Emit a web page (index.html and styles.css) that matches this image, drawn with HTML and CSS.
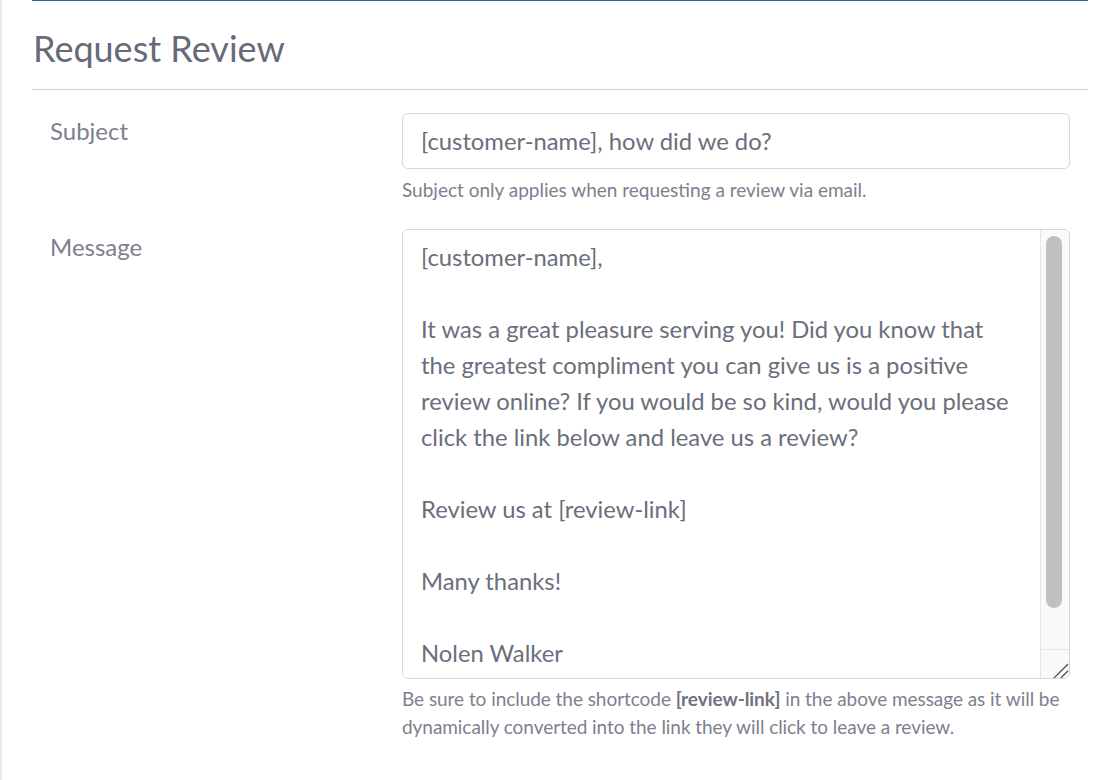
FILE: index.html
```html
<!DOCTYPE html>
<html lang="en">
<head>
<meta charset="utf-8">
<title>Request Review</title>
<link rel="stylesheet" href="styles.css">
</head>
<body>
<div class="page">
  <div class="rail"></div>
  <main class="main">
    <section class="panel">
      <h1 class="title">Request Review</h1>
      <div class="row row-subject">
        <label class="label" for="subject">Subject</label>
        <div class="field">
          <input id="subject" class="input" type="text" value="[customer-name], how did we do?">
          <p class="help">Subject only applies when requesting a review via email.</p>
        </div>
      </div>
      <div class="row row-message">
        <label class="label" for="message">Message</label>
        <div class="field">
          <div class="textbox">
            <textarea id="message" class="textarea">[customer-name],

It was a great pleasure serving you! Did you know that the greatest compliment you can give us is a positive review online? If you would be so kind, would you please click the link below and leave us a review?

Review us at [review-link]

Many thanks!

Nolen Walker
</textarea>
            <div class="scrollbar" aria-hidden="true">
              <div class="track"><div class="thumb"></div></div>
              <div class="corner">
                <svg width="29" height="29" viewBox="0 0 29 29"><path d="M13 29 L28 14 M20 29 L28 21" stroke="#575757" stroke-width="1.4" fill="none"/></svg>
              </div>
            </div>
          </div>
          <p class="help help-long">Be sure to include the shortcode <strong>[review-link]</strong> in the above message as it will be dynamically converted into the link they will click to leave a review.</p>
        </div>
      </div>
    </section>
  </main>
</div>
</body>
</html>
```
FILE: styles.css
```css
* { box-sizing: border-box; }
html, body { margin: 0; padding: 0; background: #fff; }
body {
  font-family: Lato, "Open Sans", sans-serif;
  color: #6b6e7b;
  width: 1112px;
  height: 780px;
  overflow: hidden;
}
.page { display: flex; height: 780px; }
.rail { width: 2px; background: #e8e8ef; flex: none; }
.main { flex: 1; padding: 0 24px 0 30px; }
.panel { border-top: 1px solid #2b68a8; }
.title {
  margin: 0;
  font-size: 36px;
  font-weight: 400;
  line-height: 40px;
  color: #676a77;
  padding: 27px 0 21px 1px;
  border-bottom: 1px solid #cfcfd3;
}
.row { display: flex; padding: 0 18px; }
.row-subject { padding-top: 23px; }
.row-message { padding-top: 27px; }
.label {
  width: 352px;
  flex: none;
  font-size: 24px;
  line-height: 34px;
  color: #7d808e;
  padding-top: 1px;
}
.field { flex: 1; }
.input {
  display: block;
  width: 100%;
  height: 56px;
  border: 1px solid #d6d6e0;
  border-radius: 6px;
  padding: 0 18px;
  font-family: inherit;
  font-size: 23.8px;
  color: #6b6e7b;
  background: #fff;
  outline: none;
}
.help {
  margin: 0;
  font-size: 19px;
  line-height: 24px;
  color: #7d808e;
  padding-top: 9px;
}
.textbox {
  display: flex;
  height: 450px;
  border: 1px solid #d6d6e0;
  border-radius: 6px;
  overflow: hidden;
  background: #fff;
}
.textarea {
  flex: 1;
  min-width: 0;
  height: 100%;
  border: 0;
  padding: 9px 20px 10px 18px;
  font-family: inherit;
  font-size: 23.8px;
  line-height: 36px;
  color: #6b6e7b;
  background: #fff;
  resize: none;
  outline: none;
  overflow: hidden;
}
.scrollbar {
  width: 29px;
  flex: none;
  display: flex;
  flex-direction: column;
  background: #fafafa;
  border-left: 1px solid #e6e6e6;
}
.track { flex: 1; padding: 6px 7px 0 5px; }
.thumb {
  height: 372px;
  background: #c1c1c1;
  border-radius: 8px;
}
.corner {
  height: 29px;
  flex: none;
  border-top: 1px solid #e6e6e6;
  display: flex;
  justify-content: flex-end;
  align-items: flex-end;
}
.corner svg { display: block; margin-bottom: -1px; }
.help-long {
  padding-top: 6px;
  line-height: 28px;
  letter-spacing: -0.05px;
}
.help-long strong { font-weight: 700; color: #6f7280; }
```
